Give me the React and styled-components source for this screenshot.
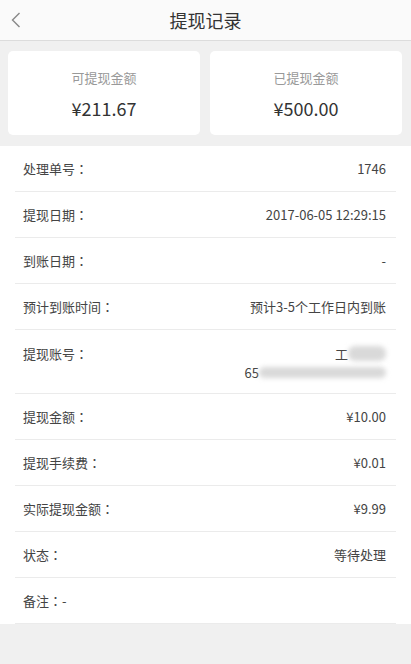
import React from "react";
import styled, { createGlobalStyle } from "styled-components";

const Global = createGlobalStyle`
  html, body {
    margin: 0;
    padding: 0;
    background: #f0f0f0;
    font-family: "Microsoft YaHei", "Noto Sans CJK SC", "Liberation Sans", sans-serif;
  }
  * { box-sizing: border-box; }
`;

const rows = [
  { label: "处理单号", value: "1746" },
  { label: "提现日期", value: "2017-06-05 12:29:15" },
  { label: "到账日期", value: "-" },
  { label: "预计到账时间", value: "预计3-5个工作日内到账" },
  { label: "提现账号", account: true },
  { label: "提现金额", value: "¥10.00" },
  { label: "提现手续费", value: "¥0.01" },
  { label: "实际提现金额", value: "¥9.99" },
  { label: "状态", value: "等待处理" },
  { label: "备注", tail: "-", value: "" },
];

export default function App() {
  return (
    <Page>
      <Global />
      <Header>
        <Back>
          <svg width="10" height="16" viewBox="0 0 10 16">
            <path d="M8.5 1 L1.5 8 L8.5 15" fill="none" stroke="#888" strokeWidth="1.4" />
          </svg>
        </Back>
        <Title>提现记录</Title>
      </Header>
      <Summary>
        <Card>
          <CardLabel>可提现金额</CardLabel>
          <CardValue>¥211.67</CardValue>
        </Card>
        <Card>
          <CardLabel>已提现金额</CardLabel>
          <CardValue>¥500.00</CardValue>
        </Card>
      </Summary>
      <List>
        {rows.map((r) => (
          <Row key={r.label} tall={r.account}>
            <Label>
              {r.label}
              <Colon>：</Colon>
              {r.tail}
            </Label>
            {r.account ? (
              <Account>
                <AccountLine>
                  工<Blur width={38} height={15} />
                </AccountLine>
                <AccountLine>
                  65<Blur width={127} height={11} />
                </AccountLine>
              </Account>
            ) : (
              <Value>{r.value}</Value>
            )}
          </Row>
        ))}
      </List>
    </Page>
  );
}

const Page = styled.div`
  min-height: 664px;
  background: #f0f0f0;
`;

const Header = styled.div`
  position: relative;
  height: 41px;
  background: #fafafa;
  border-bottom: 1px solid #dcdcdc;
  display: flex;
  align-items: center;
  justify-content: center;
`;

const Back = styled.div`
  position: absolute;
  left: 11px;
  top: 12px;
  display: flex;
`;

const Title = styled.div`
  font-size: 18px;
  color: #333;
`;

const Summary = styled.div`
  display: grid;
  grid-template-columns: 1fr 1fr;
  gap: 10px;
  padding: 10px 9px 11px 8px;
`;

const Card = styled.div`
  height: 84px;
  background: #fff;
  border-radius: 5px;
  display: flex;
  flex-direction: column;
  align-items: center;
  justify-content: center;
  gap: 8px;
  padding-top: 2px;
`;

const CardLabel = styled.div`
  font-size: 13px;
  color: #999;
`;

const CardValue = styled.div`
  font-size: 18px;
  color: #333;
`;

const List = styled.div`
  background: #fff;
  padding: 0 15px;
`;

const Row = styled.div`
  display: flex;
  justify-content: space-between;
  align-items: ${(p) => (p.tall ? "flex-start" : "center")};
  height: ${(p) => (p.tall ? "64px" : "46px")};
  padding: ${(p) => (p.tall ? "14px 10px 0 8px" : "0 10px 0 8px")};
  border-bottom: 1px solid #ebebeb;
  font-size: 13px;
  color: #444;
`;

const Label = styled.div``;

const Colon = styled.span`
  font-family: "Noto Sans CJK JP", "Noto Sans CJK SC", sans-serif;
`;

const Value = styled.div``;

const Account = styled.div`
  display: flex;
  flex-direction: column;
  align-items: flex-end;
  line-height: 19px;
`;

const AccountLine = styled.div`
  display: flex;
  align-items: center;
`;

const Blur = styled.span`
  display: inline-block;
  width: ${(p) => p.width}px;
  height: ${(p) => p.height}px;
  border-radius: 7px;
  background: #d9d9d9;
  filter: blur(2.5px);
`;
